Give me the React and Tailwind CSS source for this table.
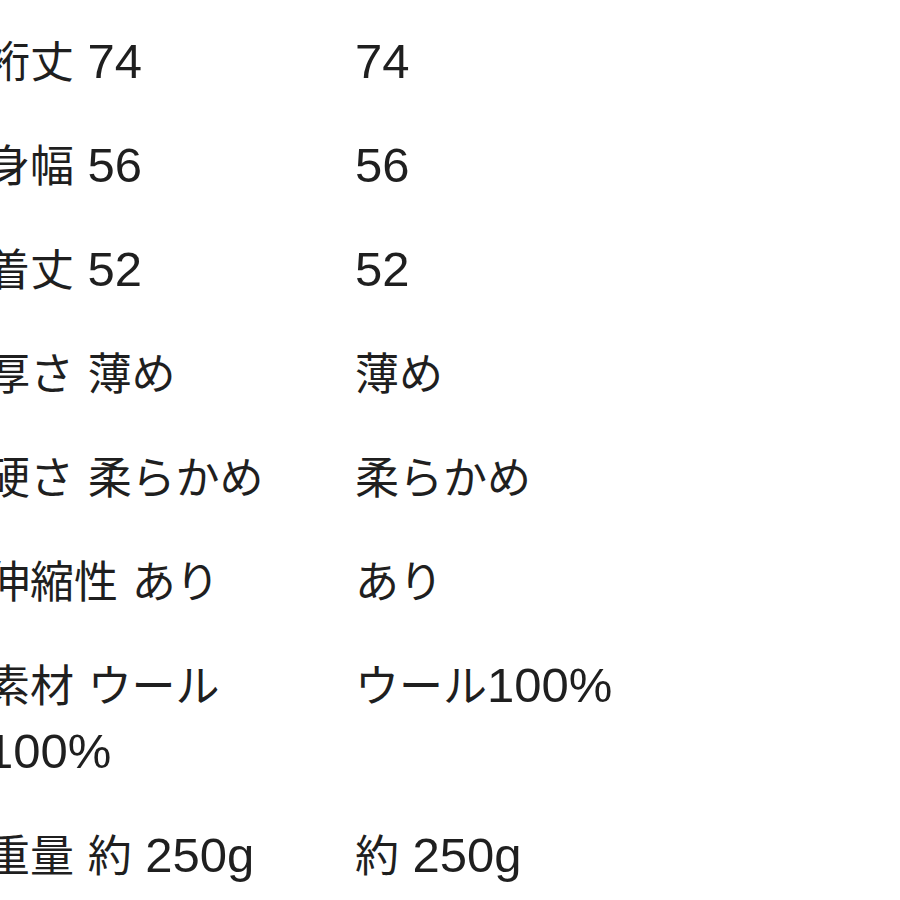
import React from "react";

const rows = [
  { label: "裄丈 74", value: "74" },
  { label: "身幅 56", value: "56" },
  { label: "着丈 52", value: "52" },
  { label: "厚さ 薄め", value: "薄め" },
  { label: "硬さ 柔らかめ", value: "柔らかめ" },
  { label: "伸縮性 あり", value: "あり" },
  { label: "素材 ウール100%", value: "ウール100%" },
  { label: "重量 約 250g", value: "約 250g" },
];

// latin runs get a wider helvetica-like face, like the original phone font
const Mixed = ({ text }) => {
  const parts = text.split(/([ 0-9A-Za-z%]+)/).filter((p) => p !== "");
  return parts.map((part, index) =>
    /^[ 0-9A-Za-z%]+$/.test(part) ? (
      <span
        key={index}
        className="text-[49px] leading-none"
        style={{ fontFamily: '"Liberation Sans", Arial, sans-serif' }}
      >
        {part}
      </span>
    ) : (
      <span key={index}>{part}</span>
    )
  );
};

const App = () => {
  return (
    <div
      className="w-[900px] h-[900px] overflow-hidden bg-white text-[#1f1f1f] text-[44px] leading-[66px]"
      style={{ fontFamily: '"Noto Sans CJK JP", "Noto Sans", sans-serif' }}
    >
      <div className="pt-[7px] -ml-[14px]">
        {rows.map((row, index) => (
          <div key={index} className="flex py-[19px]">
            <div className="w-[294px] shrink-0">
              <Mixed text={row.label} />
            </div>
            <div className="ml-[75px]">
              <Mixed text={row.value} />
            </div>
          </div>
        ))}
      </div>
    </div>
  );
};
export default App;
